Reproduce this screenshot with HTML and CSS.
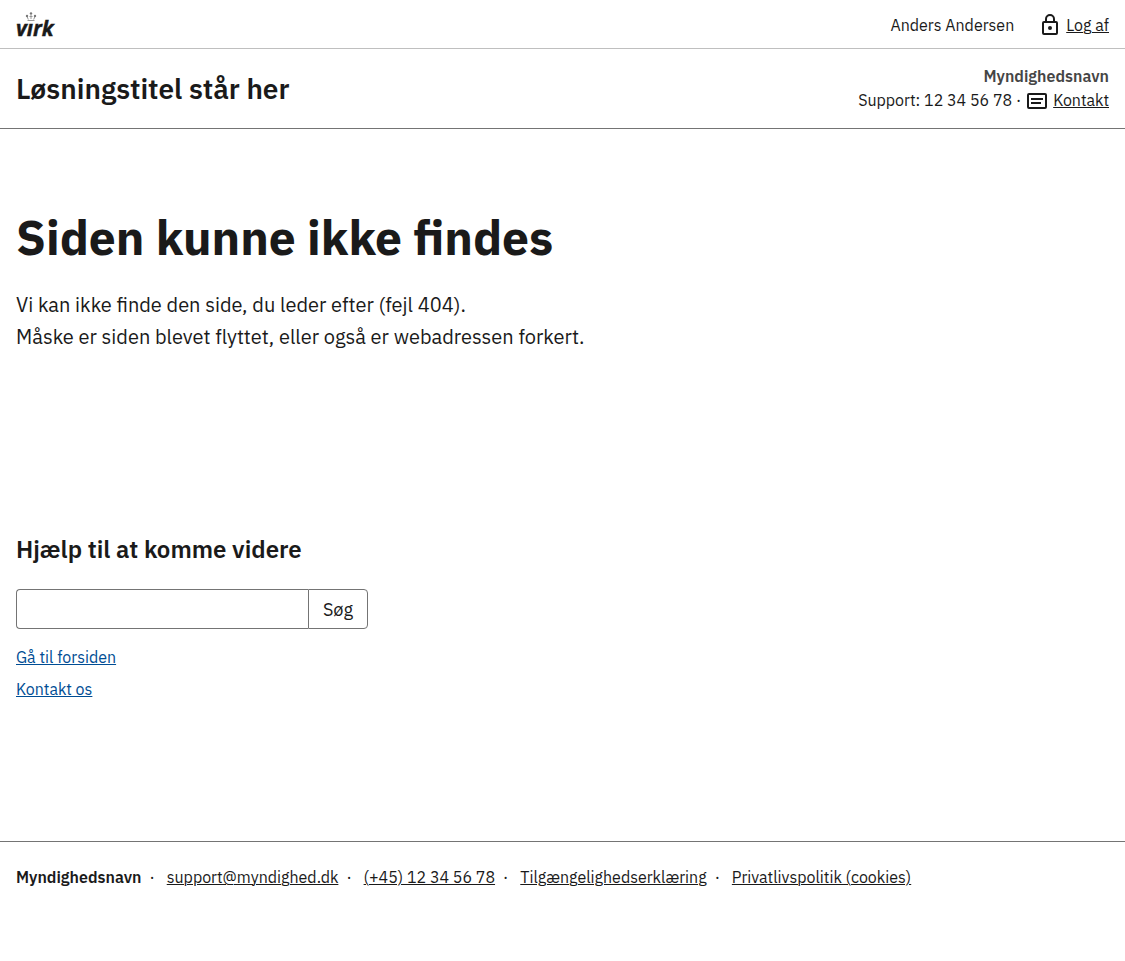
FILE: index.html
```
<!DOCTYPE html>
<html lang="da">
<head>
<meta charset="utf-8">
<meta name="viewport" content="width=device-width, initial-scale=1">
<title>Siden kunne ikke findes</title>
<link rel="stylesheet" href="styles.css">
</head>
<body>
<header>
  <div class="portal-bar">
    <a class="logo" href="#" aria-label="virk">
      <svg class="logo-mark" viewBox="0 0 40 26" aria-hidden="true">
        <text class="logo-text" x="0" y="25">vırk</text>
        <g class="crown">
          <circle cx="15" cy="2.500" r="1.2"/>
          <circle cx="11" cy="5" r="1.2"/>
          <circle cx="19" cy="5" r="1.2"/>
          <path d="M15 4V8M11.300 6l1 2.500M18.700 6l-1 2.500M13.500 5.500h3"/>
          <path d="M11.500 9.500h7"/>
        </g>
      </svg>
    </a>
    <div class="user">
      <span>Anders Andersen</span>
      <a class="icon-link" href="#">
        <svg class="icon" viewBox="0 0 24 24" aria-hidden="true">
          <rect x="5" y="9" width="14" height="12" rx="1"/>
          <path d="M8 9V6a4 4 0 0 1 8 0v3"/>
          <circle class="dot" cx="12" cy="15" r="2"/>
        </svg><span>Log af</span>
      </a>
    </div>
  </div>
  <div class="solution-bar">
    <p class="solution-title">Løsningstitel står her</p>
    <div class="authority">
      <strong class="authority-name">Myndighedsnavn</strong>
      <div class="support">
        <span>Support: 12 34 56 78 ·</span>
        <a class="icon-link" href="#">
          <svg class="icon" viewBox="0 0 24 24" aria-hidden="true">
            <rect x="3" y="6" width="18" height="14" rx="1"/>
            <path d="M6 11h12M6 15h10"/>
          </svg><span>Kontakt</span>
        </a>
      </div>
    </div>
  </div>
</header>
<main class="content">
  <h1 class="page-title">Siden kunne ikke findes</h1>
  <p class="lead">Vi kan ikke finde den side, du leder efter (fejl 404).<br>Måske er siden blevet flyttet, eller også er webadressen forkert.</p>
  <section class="help">
    <h2 class="help-title">Hjælp til at komme videre</h2>
    <form class="search" role="search">
      <input class="search-input" type="search" aria-label="Søg">
      <button class="search-button" type="submit">Søg</button>
    </form>
    <ul class="help-links">
      <li><a href="#">Gå til forsiden</a></li>
      <li><a href="#">Kontakt os</a></li>
    </ul>
  </section>
</main>
<footer class="footer">
  <ul class="footer-list">
    <li><strong>Myndighedsnavn</strong></li>
    <li><a href="#">support@myndighed.dk</a></li>
    <li><a href="#">(+45) 12 34 56 78</a></li>
    <li><a href="#">Tilgængelighedserklæring</a></li>
    <li><a href="#">Privatlivspolitik (cookies)</a></li>
  </ul>
</footer>
</body>
</html>
```
FILE: styles.css
```
* { box-sizing: border-box; }
body {
  margin: 0;
  background: #fff;
  color: #1a1a1a;
  font-family: "IBM Plex Sans", "Noto Sans", sans-serif;
  font-size: 16px;
  line-height: 24px;
}
a { color: inherit; text-underline-offset: 1px; text-decoration-thickness: 1px; }
h1, h2, p, ul { margin: 0; padding: 0; }
ul { list-style: none; }
strong { font-weight: 600; }

.portal-bar, .solution-bar {
  display: flex;
  align-items: center;
  justify-content: space-between;
  padding: 0 16px;
}
.portal-bar { min-height: 49px; border-bottom: 1px solid #bfbfbf; }
.solution-bar { min-height: 80px; border-bottom: 1px solid #747474; }

.logo { display: flex; }
.logo-mark { width: 40px; height: 26px; overflow: visible; }
.logo-text { font: italic 700 21px "Open Sans", sans-serif; fill: #1a1a1a; stroke: #1a1a1a; stroke-width: 0.4; }
.crown { fill: #777; stroke: #999; stroke-width: 1; }
.crown circle { stroke: none; }

.user { display: flex; align-items: center; gap: 24px; padding-top: 2px; }
.icon-link { display: inline-flex; align-items: center; gap: 4px; text-decoration: none; }
.icon-link span { text-decoration: underline; text-underline-offset: 1px; text-decoration-thickness: 1px; }
.icon { width: 24px; height: 24px; fill: none; stroke: #1a1a1a; stroke-width: 2; }
.icon .dot { fill: #1a1a1a; stroke: none; }

.solution-title { font-size: 28px; font-weight: 600; line-height: 32px; }
.authority { padding-bottom: 1px; text-align: right; }
.authority-name { display: block; color: #454545; }
.support { display: flex; align-items: center; justify-content: flex-end; gap: 4px; }

.content { padding: 80px 16px 140px; }
.page-title { font-size: 48px; font-weight: 700; line-height: 56px; margin-bottom: 24px; }
.lead { font-size: 20px; line-height: 32px; }
.help { margin-top: 180px; }
.help-title { font-size: 24px; font-weight: 600; line-height: 32px; margin-bottom: 24px; }
.search { display: flex; max-width: 352px; height: 40px; margin-bottom: 16px; }
.search-input, .search-button {
  font: inherit;
  color: inherit;
  background: #fff;
  border: 1px solid #747474;
  margin: 0;
}
.search-input { flex: 1; min-width: 0; padding: 0 12px; border-right: 0; border-radius: 4px 0 0 4px; appearance: none; }
.search-button { width: 60px; padding: 1px 0 0; font-size: 18px; border-radius: 0 4px 4px 0; }
.help-links { display: grid; gap: 8px; color: #004d94; }

.footer { padding: 23px 16px; border-top: 1px solid #747474; }
.footer-list { display: flex; flex-wrap: wrap; }
.footer-list li + li::before { content: "·"; margin: 0 12px 0 8px; }
```
